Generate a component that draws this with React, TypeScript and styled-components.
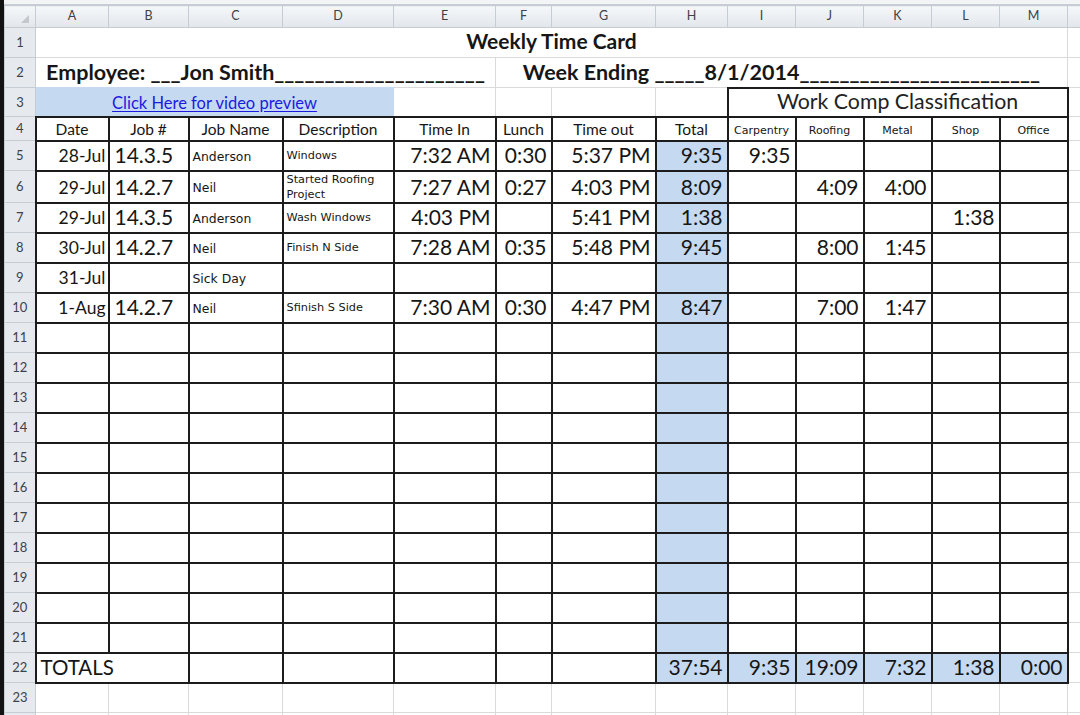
import React from 'react';
import styled, { createGlobalStyle, css } from 'styled-components';

const SANS = `Lato, "Open Sans", "Noto Sans", sans-serif`;
const TAHOMA = `"DejaVu Sans", Verdana, sans-serif`;
const BLUE = '#c5d9f1';
const INK = '#161616';
const LINE = '#1c1c1c';

const GlobalStyle = createGlobalStyle`
  html, body { margin: 0; padding: 0; background: #fff; overflow: hidden; }
  body { font-family: ${SANS}; }
  #root { width: 1080px; height: 715px; }
`;

const Window = styled.div`
  width: 1080px;
  height: 715px;
  overflow: hidden;
  border-left: 4px solid #121212;
  box-sizing: border-box;
  background: #fff;
`;

const TopStrip = styled.div`
  height: 4px;
  background: #f3f4f6;
  border-bottom: 1px solid #c8cdd5;
`;

const Sheet = styled.table`
  border-collapse: collapse;
  table-layout: fixed;
  width: 1123px;
`;

const Col = styled.col<{ $w: number }>`
  width: ${(p) => p.$w}px;
`;

const Row = styled.tr<{ $h: number }>`
  height: ${(p) => p.$h}px;
`;

const HeaderBase = css`
  padding: 0;
  border: 1px solid #c6ccd4;
  color: #3c414a;
  font: 400 12.5px/1 ${SANS};
  text-align: center;
  vertical-align: middle;
  overflow: hidden;
  white-space: nowrap;
`;

const ColHead = styled.th`
  ${HeaderBase}
  background: linear-gradient(#f5f7f9, #e2e6eb);
`;

const Corner = styled.th`
  ${HeaderBase}
  position: relative;
  background: linear-gradient(#f5f7f9, #e2e6eb);
  &::after {
    content: '';
    position: absolute;
    right: 6px;
    bottom: 4px;
    border-style: solid;
    border-width: 0 0 8px 8px;
    border-color: transparent transparent #c3c8cf transparent;
  }
`;

const RowHead = styled.th`
  ${HeaderBase}
  background: #e6e9ee;
  font-size: 13px;
`;

type Align = 'left' | 'center' | 'right';

const Cell = styled.td<{ $align?: Align; $boxed?: boolean; $fill?: boolean }>`
  padding: 0 4px 3px;
  border: 1px solid #dadada;
  text-align: ${(p) => p.$align ?? 'left'};
  vertical-align: bottom;
  white-space: nowrap;
  overflow: hidden;
  color: ${INK};
  font: 400 21px/24px ${SANS};
  ${(p) => p.$boxed && css`border: 2px solid ${LINE};`}
  ${(p) => p.$fill && css`background: ${BLUE};`}
`;

const TitleCell = styled(Cell)`
  font: 700 21px/24px ${SANS};
  text-align: center;
  padding-bottom: 4px;
`;

const BannerCell = styled(Cell)`
  font: 700 21.5px/24px ${SANS};
  text-align: center;
  padding-bottom: 3px;
`;

const EmployeeCell = styled(BannerCell)`
  border-bottom: none;
`;

const LinkCell = styled(Cell)`
  background: ${BLUE};
  border-color: ${BLUE};
  text-align: center;
  font: 400 16.5px/20px ${SANS};
  padding-bottom: 3px;
`;

const VideoLink = styled.a`
  color: #1b1be0;
  text-decoration: underline;
  text-underline-offset: 2px;
`;

const ClassTitle = styled(Cell)`
  border: 2px solid ${LINE};
  text-align: center;
  font: 400 21.3px/24px ${SANS};
  color: #222;
  padding-bottom: 3px;
`;

const HeadCell = styled(Cell)`
  border: 2px solid ${LINE};
  text-align: center;
  font: 400 15.5px/18px ${SANS};
  padding: 0 2px 2px;
`;

const SubHeadCell = styled(HeadCell)`
  font: 400 11px/14px ${TAHOMA};
  padding-bottom: 2px;
`;

const DateCell = styled(Cell)`
  font: 400 17.5px/22px ${SANS};
  text-align: right;
  padding: 0 2px 3px 0;
`;

const JobCell = styled(Cell)`
  font: 400 21px/24px ${SANS};
  padding: 0 2px 3px 5px;
`;

const NameCell = styled(Cell)`
  font: 400 12.4px/16px ${TAHOMA};
  vertical-align: middle;
  padding: 2px 2px 0 3px;
`;

const DescCell = styled(Cell)`
  font: 400 11.3px/15px ${TAHOMA};
  vertical-align: middle;
  white-space: normal;
  padding: 0 2px 0 3px;
`;

const TimeCell = styled(Cell)`
  text-align: right;
`;

const TotalsLabel = styled(Cell)`
  border: 2px solid ${LINE};
  font: 400 20.5px/24px ${SANS};
  padding-left: 4px;
`;

const COLS = [31, 73, 80, 94, 111, 102, 56, 104, 72, 68, 68, 68, 68, 68, 60];
const LETTERS = ['A', 'B', 'C', 'D', 'E', 'F', 'G', 'H', 'I', 'J', 'K', 'L', 'M', ''];

type Entry = {
  date?: string;
  job?: string;
  name?: string;
  desc?: string;
  tin?: string;
  lunch?: string;
  tout?: string;
  total?: string;
  cls?: string[];
};

const entries: Entry[] = [
  { date: '28-Jul', job: '14.3.5', name: 'Anderson', desc: 'Windows', tin: '7:32 AM', lunch: '0:30', tout: '5:37 PM', total: '9:35', cls: ['9:35', '', '', '', ''] },
  { date: '29-Jul', job: '14.2.7', name: 'Neil', desc: 'Started Roofing Project', tin: '7:27 AM', lunch: '0:27', tout: '4:03 PM', total: '8:09', cls: ['', '4:09', '4:00', '', ''] },
  { date: '29-Jul', job: '14.3.5', name: 'Anderson', desc: 'Wash Windows', tin: '4:03 PM', lunch: '', tout: '5:41 PM', total: '1:38', cls: ['', '', '', '1:38', ''] },
  { date: '30-Jul', job: '14.2.7', name: 'Neil', desc: 'Finish N Side', tin: '7:28 AM', lunch: '0:35', tout: '5:48 PM', total: '9:45', cls: ['', '8:00', '1:45', '', ''] },
  { date: '31-Jul', name: 'Sick Day' },
  { date: '1-Aug', job: '14.2.7', name: 'Neil', desc: 'Sfinish S Side', tin: '7:30 AM', lunch: '0:30', tout: '4:47 PM', total: '8:47', cls: ['', '7:00', '1:47', '', ''] },
];

const allRows: Entry[] = [...entries, ...Array.from({ length: 11 }, () => ({} as Entry))];

const totals = ['37:54', '9:35', '19:09', '7:32', '1:38', '0:00'];
const classes = ['Carpentry', 'Roofing', 'Metal', 'Shop', 'Office'];
const heads = ['Date', 'Job #', 'Job Name', 'Description', 'Time In', 'Lunch', 'Time out', 'Total'];

export default function App() {
  return (
    <>
      <GlobalStyle />
      <Window>
        <TopStrip />
        <Sheet>
          <colgroup>
            {COLS.map((w, i) => (
              <Col key={i} $w={w} />
            ))}
          </colgroup>
          <tbody>
            <Row $h={22}>
              <Corner />
              {LETTERS.map((l, i) => (
                <ColHead key={i}>{l}</ColHead>
              ))}
            </Row>
            <Row $h={30}>
              <RowHead>1</RowHead>
              <TitleCell colSpan={13}>Weekly Time Card</TitleCell>
              <Cell />
            </Row>
            <Row $h={30}>
              <RowHead>2</RowHead>
              <EmployeeCell colSpan={5}>Employee: ___Jon Smith_____________________</EmployeeCell>
              <BannerCell colSpan={8}>Week Ending _____8/1/2014________________________</BannerCell>
              <Cell />
            </Row>
            <Row $h={29}>
              <RowHead>3</RowHead>
              <LinkCell colSpan={4}>
                <VideoLink href="#">Click Here for video preview</VideoLink>
              </LinkCell>
              <Cell />
              <Cell />
              <Cell />
              <Cell />
              <ClassTitle colSpan={5}>Work Comp Classification</ClassTitle>
              <Cell />
            </Row>
            <Row $h={24}>
              <RowHead>4</RowHead>
              {heads.map((h) => (
                <HeadCell key={h}>{h}</HeadCell>
              ))}
              {classes.map((c) => (
                <SubHeadCell key={c}>{c}</SubHeadCell>
              ))}
              <Cell />
            </Row>
            {allRows.map((r, i) => (
              <Row key={i} $h={i === 1 ? 32 : 30}>
                <RowHead>{i + 5}</RowHead>
                <DateCell $boxed>{r.date}</DateCell>
                <JobCell $boxed>{r.job}</JobCell>
                <NameCell $boxed>{r.name}</NameCell>
                <DescCell $boxed>{r.desc}</DescCell>
                <TimeCell $boxed>{r.tin}</TimeCell>
                <TimeCell $boxed>{r.lunch}</TimeCell>
                <TimeCell $boxed>{r.tout}</TimeCell>
                <TimeCell $boxed $fill>{r.total}</TimeCell>
                {(r.cls ?? ['', '', '', '', '']).map((v, j) => (
                  <TimeCell key={j} $boxed>{v}</TimeCell>
                ))}
                <Cell />
              </Row>
            ))}
            <Row $h={30}>
              <RowHead>22</RowHead>
              <TotalsLabel colSpan={2}>TOTALS</TotalsLabel>
              <Cell $boxed />
              <Cell $boxed />
              <Cell $boxed />
              <Cell $boxed />
              <Cell $boxed />
              {totals.map((t, j) => (
                <TimeCell key={j} $boxed $fill>{t}</TimeCell>
              ))}
              <Cell />
            </Row>
            <Row $h={30}>
              <RowHead>23</RowHead>
              {LETTERS.map((l, i) => (
                <Cell key={i} />
              ))}
            </Row>
            <Row $h={30}>
              <RowHead />
              {LETTERS.map((l, i) => (
                <Cell key={i} />
              ))}
            </Row>
          </tbody>
        </Sheet>
      </Window>
    </>
  );
}
